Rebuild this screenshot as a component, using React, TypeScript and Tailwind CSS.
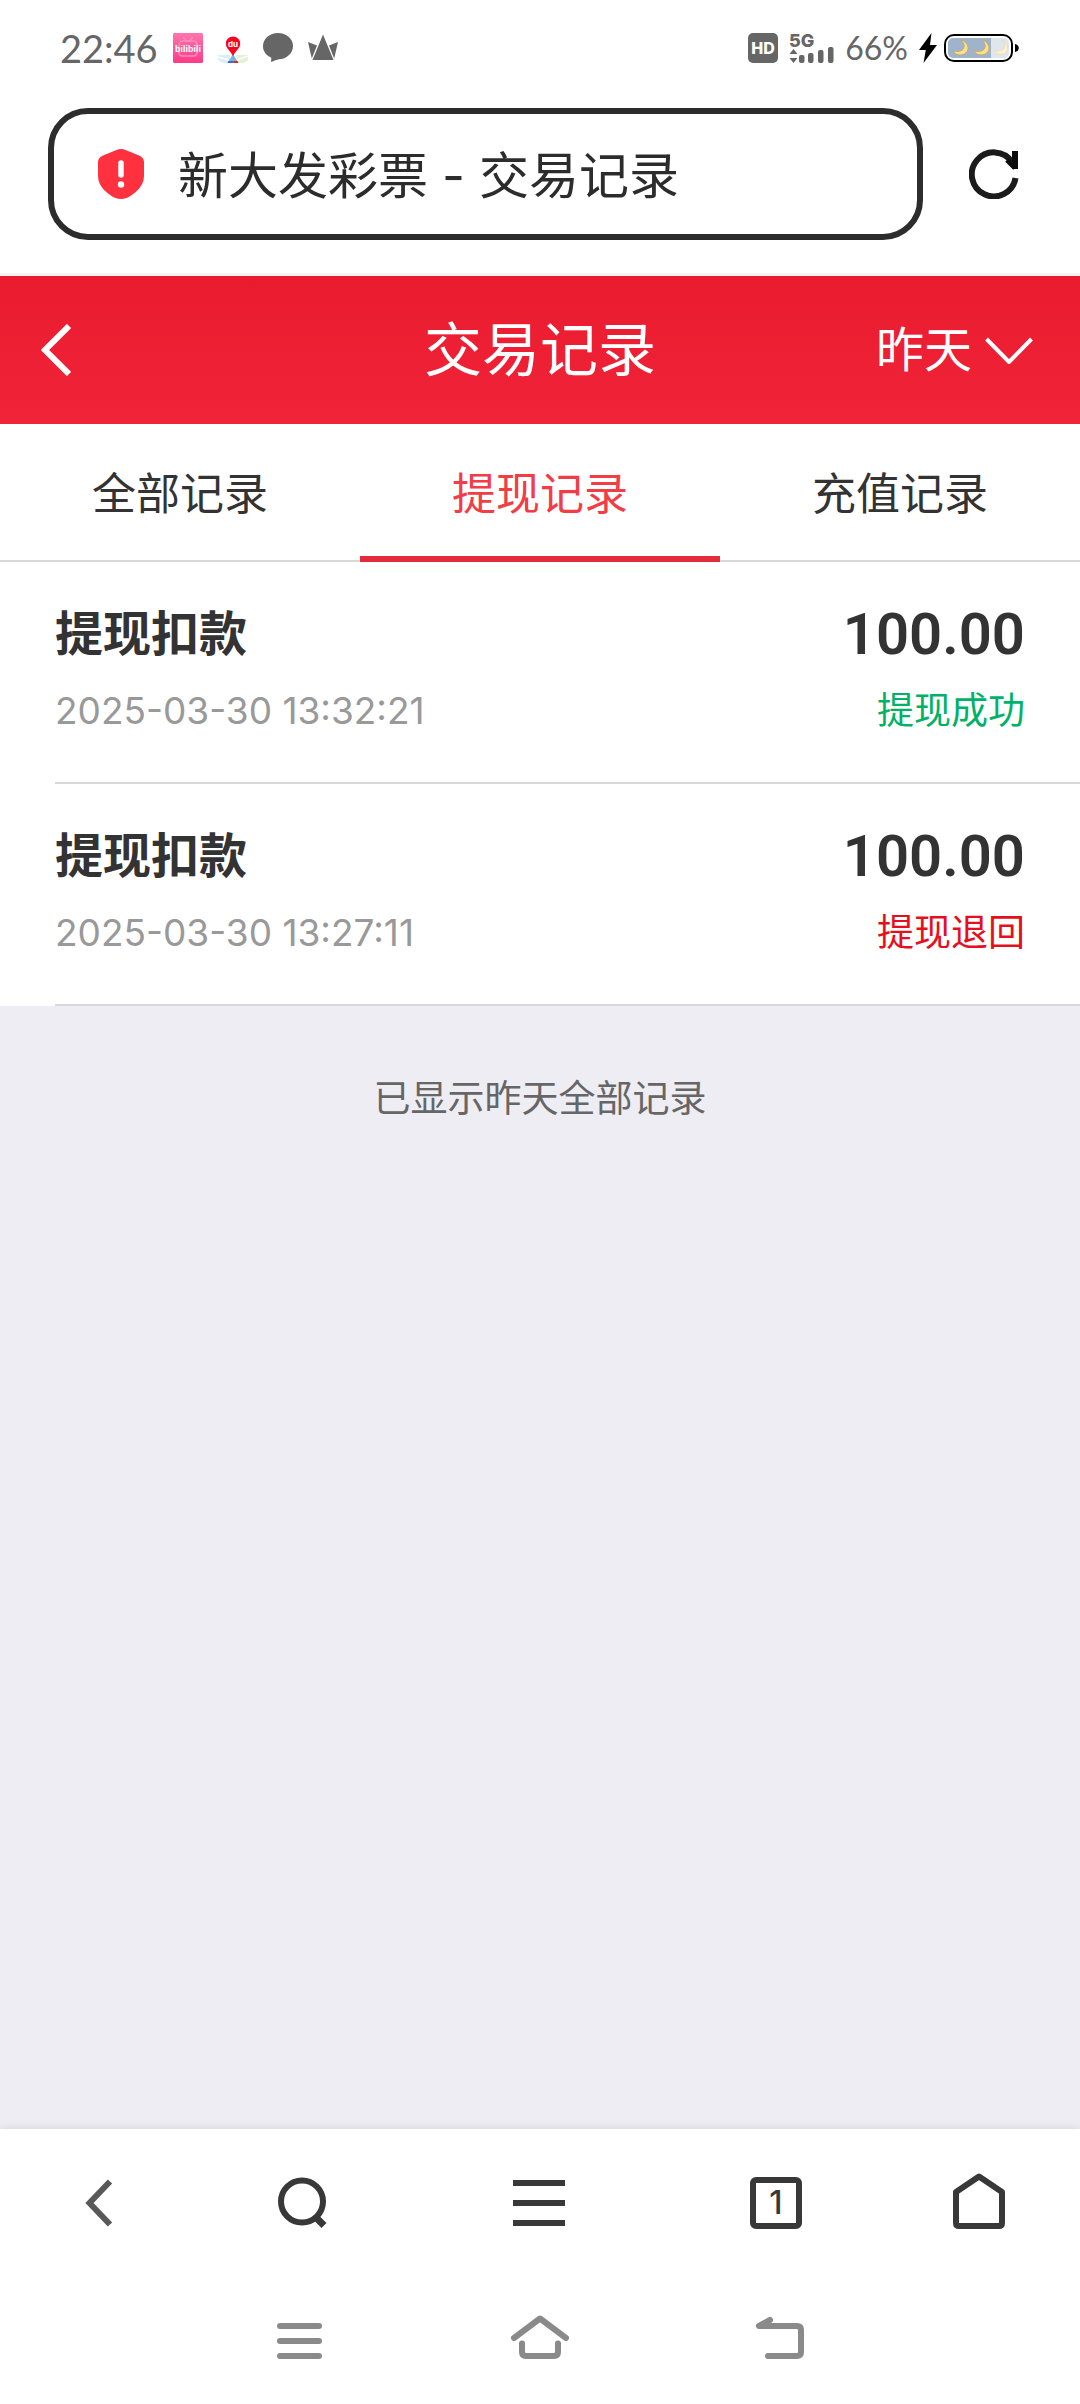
import React, { useState } from 'react';

type RecordItem = {
  title: string;
  time: string;
  amount: string;
  status: string;
  returned?: boolean;
};

const TABS = ['全部记录', '提现记录', '充值记录'];

const RECORDS: RecordItem[] = [
  { title: '提现扣款', time: '2025-03-30 13:32:21', amount: '100.00', status: '提现成功' },
  { title: '提现扣款', time: '2025-03-30 13:27:11', amount: '100.00', status: '提现退回', returned: true },
];

// --- STATUS BAR ICONS ---
const BiliIcon = () => (
  <svg className="w-[30px] h-[30px]" viewBox="0 0 30 30">
    <defs>
      <linearGradient id="bili" x1="0" y1="0" x2="0" y2="1">
        <stop offset="0" stopColor="#ff74ad" />
        <stop offset="1" stopColor="#fb3c86" />
      </linearGradient>
    </defs>
    <rect width="30" height="30" rx="1.5" fill="url(#bili)" />
    <g fill="none" stroke="#ff8cba" strokeWidth="1.6" strokeLinecap="round">
      <rect x="6" y="8" width="18" height="15" rx="3.5" />
      <path d="M10.5 4.5l3 3.5M19.5 4.5l-3 3.5" />
    </g>
    <text x="15" y="19" textAnchor="middle" fontFamily="Liberation Sans, sans-serif" fontSize="9" fontWeight="700" fill="#fff">bilibili</text>
  </svg>
);
const MapIcon = () => (
  <svg className="w-[30px] h-[30px]" viewBox="0 0 30 30">
    <path d="M0 22h12v8H5L0 27z" fill="#dbeef8" />
    <path d="M18 22h12v5l-4 3h-6z" fill="#e3f1d6" />
    <path d="M0 24l11 3M19 27l11-4" stroke="#fff" strokeWidth="1.5" />
    <path d="M15 21l5.5 9h-11z" fill="#7fb2dc" />
    <path d="M10.5 28h5v2h-6z" fill="#2f6fd0" />
    <path d="M15.500 28h4l1 2h-5z" fill="#e0262d" />
    <path d="M15 3.500a7.200 7.200 0 0 1 7.200 7.200c0 4.600-4.600 6.800-7.200 12.300c-2.600-5.500-7.200-7.700-7.200-12.300a7.200 7.200 0 0 1 7.200-7.200z" fill="#f4071f" />
    <text x="15" y="14" textAnchor="middle" fontFamily="Inter, sans-serif" fontSize="8" fontWeight="700" fill="#fff">du</text>
  </svg>
);
const BubbleIcon = () => (
  <svg className="w-[30px] h-[30px]" viewBox="0 0 30 30" fill="#666">
    <path d="M15 0c8.300 0 15 5.600 15 13s-6.700 13.200-14 13.200c-2 .3-5.300 1.600-8 2.800l.3-4.300C3.400 22.400 0 18.500 0 13.200C0 5.800 6.700 0 15 0z" />
  </svg>
);
const CrownIcon = () => (
  <svg className="w-[30px] h-[30px]" viewBox="0 0 30 30" fill="#666">
    <path d="M15 1.500L25.500 27h-21z" />
    <path d="M0 9l9 3.500L3.800 25.500zM30 9l-9 3.500l5.200 13z" />
  </svg>
);
const HdIcon = () => (
  <svg className="w-[30px] h-[30px]" viewBox="0 0 30 30">
    <rect width="30" height="30" rx="5" fill="#666" />
    <text x="15" y="21" textAnchor="middle" fontFamily="Inter, sans-serif" fontSize="16" fontWeight="800" fill="#fff">HD</text>
  </svg>
);
const SignalIcon = () => (
  <svg className="w-[45px] h-[30px] overflow-visible" viewBox="0 0 45 30" fill="#666">
    <text x="0" y="14" fontFamily="Inter, sans-serif" fontSize="18" fontWeight="800">5G</text>
    <path d="M4.500 16l4 5h-8zM4.500 30l4-5h-8z" />
    <rect x="10" y="22" width="5.500" height="8" rx="2" />
    <rect x="19" y="20" width="5.500" height="10" rx="2" />
    <rect x="29" y="17" width="5.500" height="13" rx="2" />
    <rect x="39" y="14" width="5.500" height="16" rx="2" />
  </svg>
);
const BoltIcon = () => (
  <svg className="w-[18px] h-[30px]" viewBox="0 0 18 30" fill="#000">
    <path d="M12.500 0L0 17h6.800L4.500 30L18 12h-7z" />
  </svg>
);
const BatteryIcon = () => (
  <svg className="w-[76px] h-7" viewBox="0 0 76 28">
    <rect x="1" y="1" width="67" height="26" rx="9" fill="#fff" stroke="#000" strokeWidth="2" />
    <path d="M9 4h38v20H9a5 5 0 0 1-5-5V9a5 5 0 0 1 5-5z" fill="#9fb4cb" />
    <path d="M47 4h13a5 5 0 0 1 5 5v10a5 5 0 0 1-5 5H47z" fill="#dfe6ed" />
    <g stroke="#c9a06a" strokeWidth=".8" fill="#f9e08c">
      <path d="M16 6c6 2 7 14-7 11c3 6 14 5 15-2c.5-5-4-9-8-9z" />
      <path d="M37 6c6 2 7 14-7 11c3 6 14 5 15-2c.5-5-4-9-8-9z" />
    </g>
    <path d="M57 6c6 2 6 13-7 10.500c3 6 13 5 13.500-1.500c.5-5-3-9-6.500-9z" fill="#fbf0cf" stroke="#ecd9bd" strokeWidth=".8" />
    <path d="M71 10c5 1 5 7 0 8z" fill="#000" />
  </svg>
);

// --- BROWSER ICONS ---
const ShieldIcon = () => (
  <svg className="w-[46px] h-[50px] shrink-0" viewBox="0 0 46 50">
    <path d="M18.500 1q4.500-1.800 9 0l13.500 5.500q5 2 5 6.500v14c0 11-10.500 19-17.500 22q-5.500 2-11 0C10.500 46 0 38 0 27V13q0-4.500 5-6.500z" fill="#ff313f" />
    <path d="M23 14v12" stroke="#fff" strokeWidth="5.500" strokeLinecap="round" />
    <circle cx="23" cy="35.500" r="3.200" fill="#fff" />
  </svg>
);
const ReloadIcon = () => (
  <svg className="w-[50px] h-[50px]" viewBox="0 0 50 50" fill="none" stroke="#1b1b1b" strokeWidth="6">
    <path d="M46.500 29A22 22 0 1 1 43 13" />
    <path d="M46 2v18" stroke="#0c0c0c" />
    <path d="M38 11l8 8" stroke="#0c0c0c" strokeWidth="5" />
  </svg>
);
const BackIcon = () => (
  <svg className="w-[30px] h-[52px]" viewBox="0 0 30 52" fill="none" stroke="#fff" strokeWidth="6">
    <path d="M28 2L4 26l24 24" />
  </svg>
);
const ArrowDownIcon = () => (
  <svg className="w-12 h-7" viewBox="0 0 48 28" fill="none" stroke="#fff" strokeWidth="4">
    <path d="M1.500 3L24 26L46.500 3" />
  </svg>
);

const toolbar = [
  {
    label: '后退',
    icon: (
      <svg className="w-[54px] h-[58px]" viewBox="0 0 54 58" fill="none" stroke="#595959" strokeWidth="6">
        <path d="M38 8.500L17.500 30L38 51.500" strokeLinejoin="miter" />
      </svg>
    ),
  },
  {
    label: '搜索',
    icon: (
      <svg className="w-[54px] h-[58px]" viewBox="0 0 54 58" fill="none" stroke="#383838" strokeWidth="6">
        <circle cx="26" cy="28.500" r="21" />
        <path d="M39 43.500l9 9" strokeWidth="7" />
      </svg>
    ),
  },
  {
    label: '菜单',
    icon: (
      <svg className="w-[54px] h-[58px]" viewBox="0 0 54 58" fill="none" stroke="#383838" strokeWidth="6">
        <path d="M1 10h52M1 30h52M1 50h52" />
      </svg>
    ),
  },
  {
    label: '标签页',
    icon: (
      <svg className="w-[54px] h-[58px]" viewBox="0 0 54 58" fill="none" stroke="#383838" strokeWidth="6">
        <rect x="4" y="7" width="46" height="46" rx="3" />
        <text x="27" y="41" textAnchor="middle" fontFamily="Inter, sans-serif" fontSize="32" fontWeight="500" fill="#383838" stroke="none">1</text>
      </svg>
    ),
  },
  {
    label: '主页',
    icon: (
      <svg className="w-[54px] h-[58px]" viewBox="0 0 54 58" fill="none" stroke="#383838" strokeWidth="6" strokeLinejoin="round">
        <path d="M27 3.500L50 19v31q0 3-3 3H7q-3 0-3-3V19z" />
      </svg>
    ),
  },
];

const systemNav = [
  {
    label: '最近任务',
    icon: (
      <svg className="w-[60px] h-11" viewBox="0 0 60 44" fill="none" stroke="#8a8a8a" strokeWidth="6" strokeLinecap="round">
        <path d="M10 11h39M10 26h39M10 41h39" />
      </svg>
    ),
  },
  {
    label: '桌面',
    icon: (
      <svg className="w-[60px] h-11" viewBox="0 0 60 44" fill="none" stroke="#8a8a8a" strokeWidth="6" strokeLinecap="round" strokeLinejoin="round">
        <path d="M4 23L30 3.500L56 23" />
        <path d="M12 28.500V37q0 4 4 4h28q4 0 4-4v-8.500" />
      </svg>
    ),
  },
  {
    label: '返回',
    icon: (
      <svg className="w-[60px] h-11" viewBox="0 0 60 44" fill="none" stroke="#8a8a8a" strokeWidth="6" strokeLinecap="round" strokeLinejoin="round">
        <path d="M20 5L9 11h38q4 0 4 4v22q0 4-4 4H18" />
      </svg>
    ),
  },
];
// --- END ICONS ---

export default function App() {
  const [activeTab, setActiveTab] = useState(1);
  const [url, setUrl] = useState('新大发彩票 - 交易记录');

  return (
    <div className="min-h-screen flex flex-col bg-[#eeedf3] text-[#333] font-['Inter','Noto_Sans_CJK_SC',sans-serif]">
      {/* Status bar */}
      <div className="h-24 bg-white flex items-center justify-between px-[60px] text-[#666]">
        <div className="flex items-center gap-[15px]">
          <span className="text-[38px] leading-[40px] font-['Lato',sans-serif]">22:46</span>
          <BiliIcon />
          <MapIcon />
          <BubbleIcon />
          <CrownIcon />
        </div>
        <div className="flex items-center gap-[11px]">
          <HdIcon />
          <SignalIcon />
          <span className="text-[32px] leading-[40px] font-['Lato',sans-serif]">66%</span>
          <div className="flex items-center gap-[7px]">
            <BoltIcon />
            <BatteryIcon />
          </div>
        </div>
      </div>

      {/* Address bar */}
      <div className="bg-white flex items-center pl-12 pr-[61px] pt-3 pb-[33px] gap-[46px] border-b-[3px] border-[#f4f4f4]">
        <label className="flex-1 min-w-0 h-[132px] flex items-center gap-[34px] px-11 border-[6px] border-[#2c2c2c] rounded-[40px]">
          <ShieldIcon />
          <input
            aria-label="地址栏"
            className="flex-1 min-w-0 pt-1 text-[50px] leading-[72px] text-[#2c2c2c] bg-transparent outline-none"
            value={url}
            onChange={(e) => setUrl(e.target.value)}
          />
        </label>
        <button aria-label="刷新">
          <ReloadIcon />
        </button>
      </div>

      {/* Page header */}
      <header className="h-[148px] grid grid-cols-3 items-center px-[41px] text-white bg-gradient-to-b from-[#ea1b2f] to-[#f12338]">
        <button aria-label="返回上一页" className="justify-self-start">
          <BackIcon />
        </button>
        <h1 className="text-center text-[58px] leading-[72px] whitespace-nowrap">交易记录</h1>
        <label className="justify-self-end flex items-center gap-3 pr-[6px]">
          <select aria-label="日期" className="appearance-none bg-transparent text-[48px] leading-[72px] outline-none" defaultValue="昨天">
            <option>今天</option>
            <option>昨天</option>
          </select>
          <ArrowDownIcon />
        </label>
      </header>

      {/* Tabs */}
      <nav className="grid grid-cols-3 bg-white">
        {TABS.map((tab, i) => (
          <button
            key={tab}
            onClick={() => setActiveTab(i)}
            className={`h-[138px] text-[44px] leading-[66px] ${
              activeTab === i
                ? 'border-b-[6px] border-[#e32b3b] text-[#f23c46] pt-2'
                : 'border-b-2 border-[#d8d8d8] pt-1'
            }`}
          >
            {tab}
          </button>
        ))}
      </nav>

      {/* Records */}
      <main className="flex-1">
        <ul className="bg-white pl-[55px]">
          {RECORDS.map((r) => (
            <li key={r.time} className="h-[222px] pt-9 pr-[55px] border-b-2 border-[#d8d8d8]">
              <div className="flex items-center justify-between">
                <h2 className="text-[48px] leading-[72px] font-bold">{r.title}</h2>
                <span className="text-[58px] leading-[72px] font-semibold font-['Roboto',sans-serif]">{r.amount}</span>
              </div>
              <div className="flex items-center justify-between mt-[11px]">
                <time className="text-[37px] leading-[60px] text-[#999]">{r.time}</time>
                <span className={`text-[37px] leading-[60px] ${r.returned ? 'text-[#e60f20]' : 'text-[#00b267]'}`}>
                  {r.status}
                </span>
              </div>
            </li>
          ))}
        </ul>
        <p className="mt-[63px] text-center text-[37px] leading-[60px] text-[#666]">已显示昨天全部记录</p>
      </main>

      {/* Browser toolbar */}
      <div className="bg-white shadow-[0_-2px_8px_rgba(0,0,0,0.08)]">
        <div className="h-[146px] grid grid-cols-[198fr_210fr_262fr_212fr_194fr] pr-1 items-center justify-items-center">
          {toolbar.map((item) => (
            <button key={item.label} aria-label={item.label}>
              {item.icon}
            </button>
          ))}
        </div>
        {/* System navigation */}
        <div className="h-[129px] grid grid-cols-3 items-center justify-items-center px-[180px] pb-[6px]">
          {systemNav.map((item) => (
            <button key={item.label} aria-label={item.label}>
              {item.icon}
            </button>
          ))}
        </div>
      </div>
    </div>
  );
}
